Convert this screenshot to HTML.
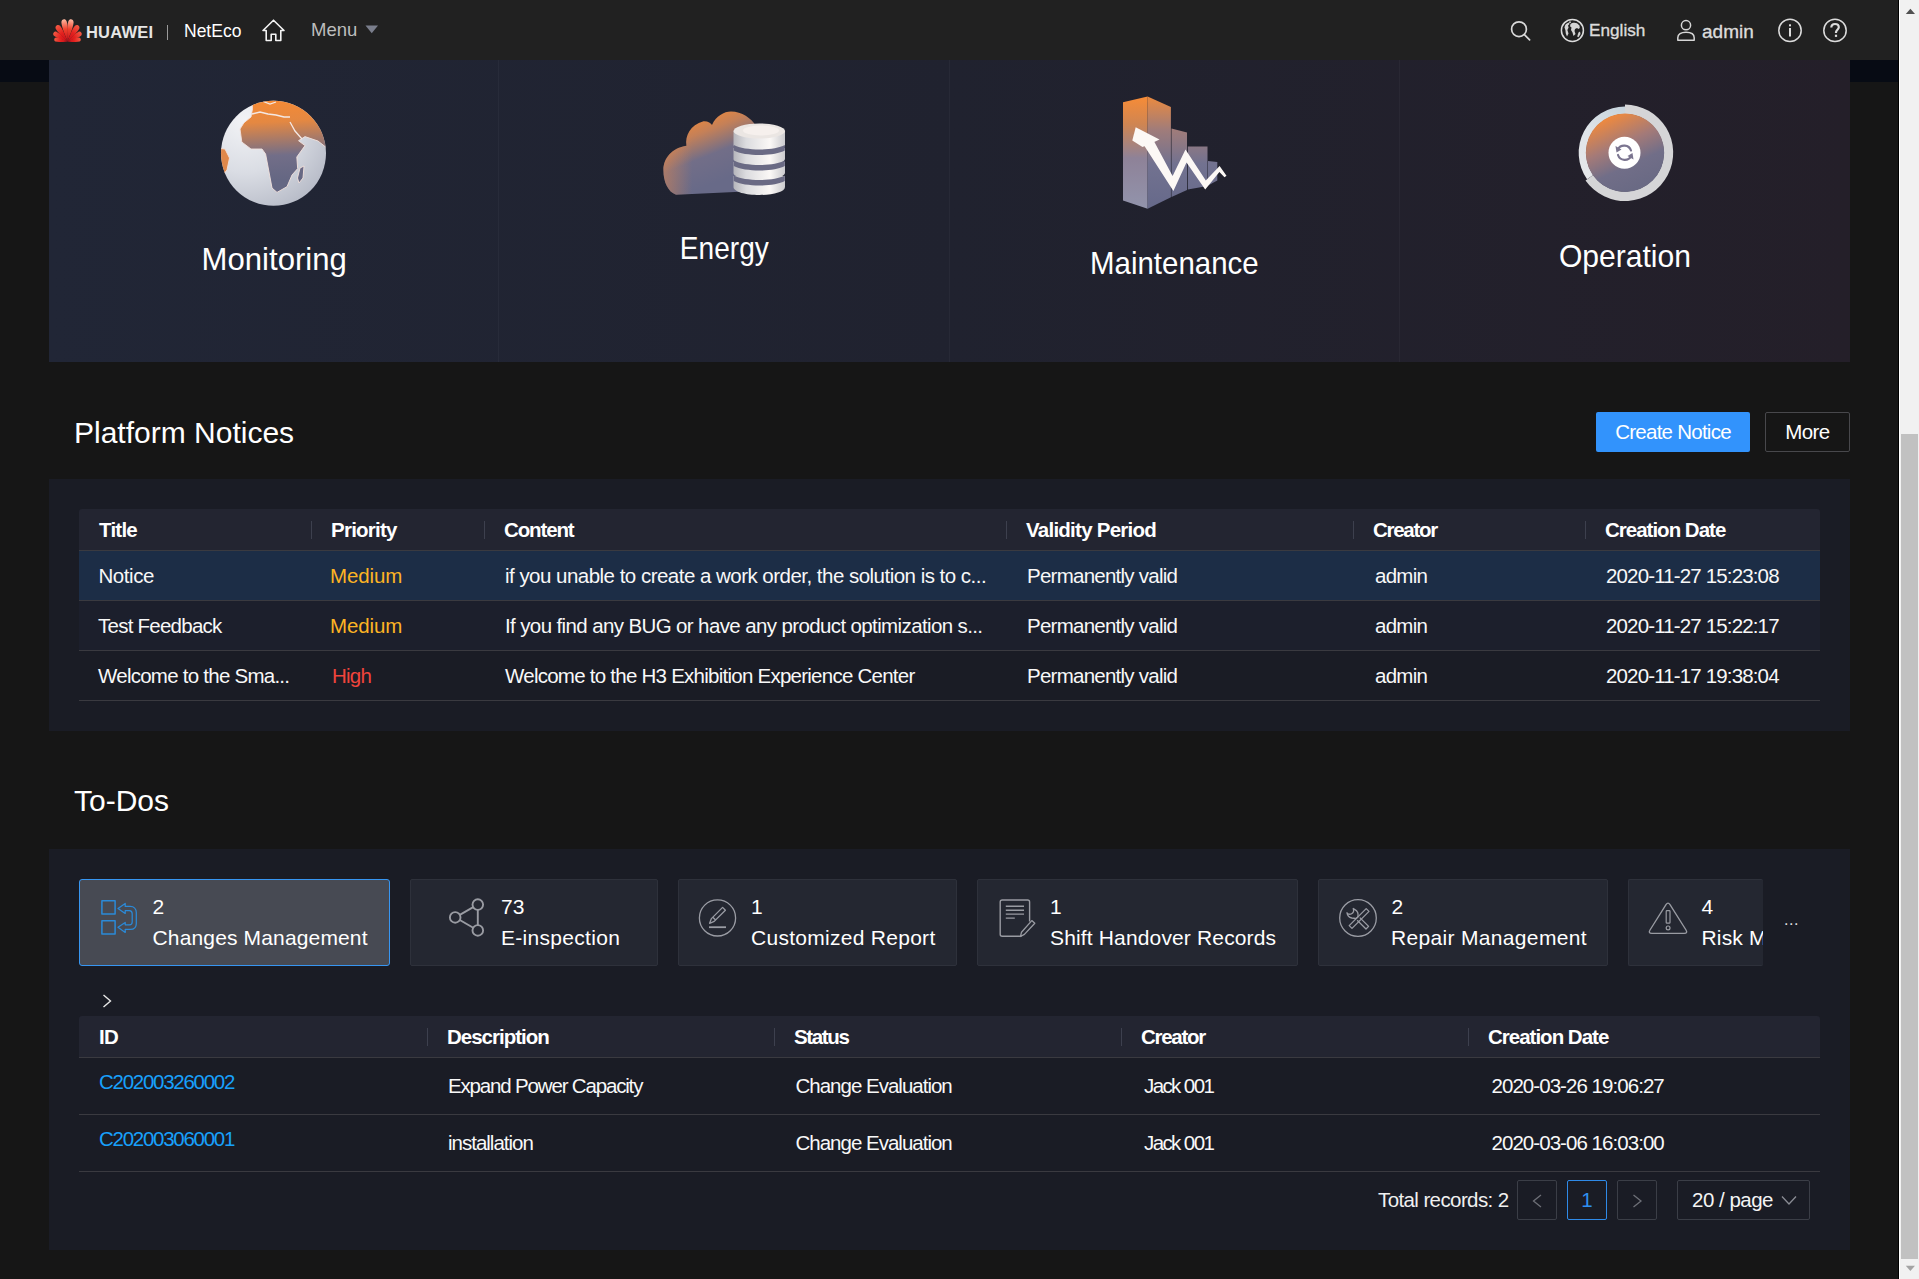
<!DOCTYPE html>
<html><head><meta charset="utf-8">
<style>
*{margin:0;padding:0;box-sizing:border-box}
html,body{width:1919px;height:1279px;overflow:hidden;background:#161616;font-family:"Liberation Sans",sans-serif;color:#fff}
.a{position:absolute}
#hdr{left:0;top:0;width:1898px;height:60px;background:#212121}
#navy{left:0;top:60px;width:1898px;height:22px;background:#070b14}
#card{left:49px;top:60px;width:1801px;height:302px;background:linear-gradient(90deg,#212636 0%,#20222f 50%,#241f29 100%)}
.div{top:0;width:1px;height:302px;background:rgba(255,255,255,0.035)}
.apt{font-size:30.5px;color:#ffffff;white-space:nowrap;line-height:1}
.sect{font-size:30px;color:#fff;white-space:nowrap;line-height:1}
.panel{background:#1a1c25}
.th{background:#232531}
.tx{white-space:nowrap;line-height:1;font-size:19px;color:#f2f2f2}
.b{font-weight:bold;font-size:18.7px;color:#fff}
.sep{width:1px;height:18px;background:#3c3f4c}
.hl{background:#1c2d46}
.ln{height:1px;background:#3a3a40}
.tab{background:#242731;border:1px solid #2e313b;border-radius:2px}
.tab.sel{background:#474a53;border:1px solid #3796f2;border-radius:3px}
.tl{font-size:21.4px;line-height:1;white-space:nowrap;color:#fff}
.row{position:absolute;left:79px;width:1741px}
.row .c{position:absolute;top:0;white-space:nowrap;font-size:20.5px;letter-spacing:-0.75px;color:#f8f8f8}
.row.h .c{font-weight:bold;color:#ffffff;letter-spacing:-0.75px}
.row .s{position:absolute;width:1px;height:18px;background:#3d404e}
.tn{position:absolute;top:895.8px;font-size:21px;line-height:1;color:#fff;white-space:nowrap}
.tlb{position:absolute;top:926.9px;font-size:21px;line-height:1;color:#fff;white-space:nowrap;letter-spacing:0.15px}
#sb{left:1898px;top:0;width:21px;height:1279px;background:#f1f1f1;border-left:1px solid #000}
</style></head><body>
<div id="hdr" class="a">
  <svg class="a" style="left:52px;top:18px" width="31" height="24" viewBox="0 0 31 24">
    <defs>
      <linearGradient id="hwa" x1="0" y1="0" x2="0" y2="1"><stop offset="0" stop-color="#ffb8a0"/><stop offset="0.45" stop-color="#f0402c"/><stop offset="1" stop-color="#c50f1a"/></linearGradient>
      <linearGradient id="hwb" x1="0" y1="0" x2="0" y2="1"><stop offset="0" stop-color="#f35a44"/><stop offset="0.5" stop-color="#e3201e"/><stop offset="1" stop-color="#c50f1a"/></linearGradient>
    </defs>
    <path fill="url(#hwa)" d="M0 0 C-1.62 -7.87 -3.24 -15.30 -2.70 -19.80 C-2.03 -23.18 2.03 -23.18 2.70 -19.80 C3.24 -15.30 1.62 -7.87 0 0Z" transform="translate(15.5 23.4) rotate(10)"/>
    <path fill="url(#hwa)" d="M0 0 C-1.62 -7.87 -3.24 -15.30 -2.70 -19.80 C-2.03 -23.18 2.03 -23.18 2.70 -19.80 C3.24 -15.30 1.62 -7.87 0 0Z" transform="translate(15.5 23.4) rotate(-10)"/>
    <path fill="url(#hwb)" d="M0 0 C-1.56 -6.82 -3.12 -13.26 -2.60 -17.16 C-1.95 -20.09 1.95 -20.09 2.60 -17.16 C3.12 -13.26 1.56 -6.82 0 0Z" transform="translate(15.5 23.4) rotate(34)"/>
    <path fill="url(#hwb)" d="M0 0 C-1.56 -6.82 -3.12 -13.26 -2.60 -17.16 C-1.95 -20.09 1.95 -20.09 2.60 -17.16 C3.12 -13.26 1.56 -6.82 0 0Z" transform="translate(15.5 23.4) rotate(-34)"/>
    <path fill="url(#hwb)" d="M0 0 C-1.44 -5.77 -2.88 -11.22 -2.40 -14.52 C-1.80 -17.00 1.80 -17.00 2.40 -14.52 C2.88 -11.22 1.44 -5.77 0 0Z" transform="translate(15.5 23.4) rotate(58)"/>
    <path fill="url(#hwb)" d="M0 0 C-1.44 -5.77 -2.88 -11.22 -2.40 -14.52 C-1.80 -17.00 1.80 -17.00 2.40 -14.52 C2.88 -11.22 1.44 -5.77 0 0Z" transform="translate(15.5 23.4) rotate(-58)"/>
    <path fill="url(#hwb)" d="M0 0 C-1.20 -4.72 -2.40 -9.18 -2.00 -11.88 C-1.50 -13.91 1.50 -13.91 2.00 -11.88 C2.40 -9.18 1.20 -4.72 0 0Z" transform="translate(15.5 23.4) rotate(81)"/>
    <path fill="url(#hwb)" d="M0 0 C-1.20 -4.72 -2.40 -9.18 -2.00 -11.88 C-1.50 -13.91 1.50 -13.91 2.00 -11.88 C2.40 -9.18 1.20 -4.72 0 0Z" transform="translate(15.5 23.4) rotate(-81)"/>
  </svg>
  <div class="a" style="left:86px;top:24px;font-size:16.5px;font-weight:bold;color:#e6e6e6;line-height:1;letter-spacing:0.2px">HUAWEI</div>
  <div class="a" style="left:167px;top:25px;width:1px;height:15px;background:#9a9a9a"></div>
  <div class="a" style="left:184px;top:23px;font-size:17.5px;color:#fff;line-height:1">NetEco</div>
  <svg class="a" style="left:262px;top:19px" width="24" height="24" viewBox="0 0 24 24" fill="none" stroke="#f4f4f4" stroke-width="1.6" stroke-linejoin="round">
    <path d="M11.5 1.2 L22 11.5 H18.8 V21.5 H13.8 V15.2 H9.2 V21.5 H4.2 V11.5 H1 Z"/>
  </svg>
  <div class="a" style="left:311px;top:21px;font-size:18.5px;color:#bdbdbd;line-height:1">Menu</div>
  <svg class="a" style="left:365px;top:25px" width="14" height="9" viewBox="0 0 14 9"><path d="M0.5 0.5 H13 L6.75 8.2Z" fill="#7a7e8c"/></svg>

  <svg class="a" style="left:1509px;top:19px" width="24" height="24" viewBox="0 0 24 24" fill="none" stroke="#d9d9d9" stroke-width="1.7">
    <circle cx="10" cy="10.2" r="7.4"/><path d="M15.4 15.6 L20.6 20.8" stroke-linecap="round"/>
  </svg>
  <svg class="a" style="left:1560px;top:18px" width="25" height="25" viewBox="0 0 25 25">
    <circle cx="12.4" cy="12.4" r="11" fill="none" stroke="#dcdcdc" stroke-width="1.5"/>
    <g fill="#d4d4d4">
      <path d="M5 7.5 C6 6 7.5 5 9 4.6 L9.5 6 L8 7.5 L8.6 9.5 L7.4 12 L8.5 15.5 L7 18.5 L5.8 15.5 L5.4 12 L4.5 9.5Z"/>
      <path d="M10.5 6 C12 4.5 15 4.3 17 5.2 L19.5 7.5 L19.8 10 L18.5 11 L17 10 L15 11 L14.5 13 L15.5 16 L13.5 18 L12.5 14.5 L11 12 L11.5 9.5 L10 8.3Z"/>
      <path d="M18.5 14.5 L20 13.5 L20.5 16 L18.5 19.2 L17.2 18.5Z"/>
      <circle cx="10" cy="4.2" r="0.9"/>
    </g>
  </svg>
  <div class="a" style="left:1589px;top:22px;font-size:17.2px;color:#dcdcdc;line-height:1;-webkit-text-stroke:0.35px #dcdcdc">English</div>
  <svg class="a" style="left:1676px;top:19px" width="20" height="23" viewBox="0 0 20 23" fill="none" stroke="#d6d6d6" stroke-width="1.5">
    <circle cx="10" cy="6.2" r="4.6"/>
    <path d="M1.8 21.2 V18.8 C1.8 15.2 5 13.3 10 13.3 C15 13.3 18.2 15.2 18.2 18.8 V21.2 Z" stroke-linejoin="round"/>
  </svg>
  <div class="a" style="left:1702px;top:22px;font-size:19px;color:#dcdcdc;line-height:1;-webkit-text-stroke:0.35px #dcdcdc">admin</div>
  <svg class="a" style="left:1777px;top:18px" width="26" height="25" viewBox="0 0 26 25">
    <circle cx="13" cy="12.4" r="11.2" fill="none" stroke="#dcdcdc" stroke-width="1.5"/>
    <rect x="12" y="10" width="2" height="8.5" fill="#dcdcdc"/><rect x="12" y="6.3" width="2" height="2" fill="#dcdcdc"/>
  </svg>
  <svg class="a" style="left:1822px;top:18px" width="26" height="25" viewBox="0 0 26 25">
    <circle cx="13" cy="12.4" r="11.2" fill="none" stroke="#dcdcdc" stroke-width="1.5"/>
    <path d="M9.3 9.6 C9.3 7.2 11 6 13 6 C15.2 6 16.8 7.3 16.8 9.3 C16.8 11.5 14 12 14 14.3 V15" fill="none" stroke="#dcdcdc" stroke-width="2.2"/>
    <rect x="12.9" y="16.7" width="2.2" height="2.2" fill="#dcdcdc"/>
  </svg>
</div>
<div id="navy" class="a"></div>
<div id="card" class="a">
  <div class="a div" style="left:449px"></div>
  <div class="a div" style="left:900px"></div>
  <div class="a div" style="left:1350px"></div>
</div>

<svg class="a" style="left:0;top:60px" width="1898" height="302" viewBox="0 60 1898 302">
  <defs>
    <linearGradient id="land" x1="262" y1="100" x2="266" y2="180" gradientUnits="userSpaceOnUse">
      <stop offset="0" stop-color="#f68a34"/><stop offset="0.28" stop-color="#e48842"/><stop offset="0.5" stop-color="#a87a68"/><stop offset="0.7" stop-color="#726e88"/><stop offset="1" stop-color="#656783"/>
    </linearGradient>
    <radialGradient id="sph" cx="245" cy="120" r="95" gradientUnits="userSpaceOnUse">
      <stop offset="0" stop-color="#f2f3f6"/><stop offset="0.55" stop-color="#dadde4"/><stop offset="1" stop-color="#b9bdc9"/>
    </radialGradient>
    <clipPath id="gclip"><circle cx="273.5" cy="153.3" r="52.5"/></clipPath>
    <linearGradient id="cloud" x1="695" y1="112" x2="722" y2="180" gradientUnits="userSpaceOnUse">
      <stop offset="0" stop-color="#f68a36"/><stop offset="0.3" stop-color="#c48058"/><stop offset="0.62" stop-color="#726e88"/><stop offset="1" stop-color="#686a88"/>
    </linearGradient>
    <linearGradient id="cloudl" x1="663" y1="0" x2="692" y2="0" gradientUnits="userSpaceOnUse">
      <stop offset="0" stop-color="#f08a44" stop-opacity="0.45"/><stop offset="1" stop-color="#f08a44" stop-opacity="0"/></linearGradient>
    <linearGradient id="disc" x1="733" y1="0" x2="786" y2="0" gradientUnits="userSpaceOnUse">
      <stop offset="0" stop-color="#b4b4ba"/><stop offset="0.25" stop-color="#dcdcdf"/><stop offset="0.7" stop-color="#fbf8f6"/><stop offset="1" stop-color="#c8c8cc"/>
    </linearGradient>
    <linearGradient id="bar" x1="0" y1="96" x2="0" y2="209" gradientUnits="userSpaceOnUse">
      <stop offset="0" stop-color="#f88c36"/><stop offset="0.25" stop-color="#cf8552"/><stop offset="0.55" stop-color="#8e8298"/><stop offset="1" stop-color="#9294ac"/>
    </linearGradient>
    <linearGradient id="bar2" x1="0" y1="96" x2="0" y2="209" gradientUnits="userSpaceOnUse">
      <stop offset="0" stop-color="#ec8a3e"/><stop offset="0.3" stop-color="#a07c7a"/><stop offset="0.6" stop-color="#727290"/><stop offset="1" stop-color="#66698a"/>
    </linearGradient>
    <linearGradient id="opd" x1="1608" y1="116" x2="1640" y2="186" gradientUnits="userSpaceOnUse">
      <stop offset="0" stop-color="#f28a3c"/><stop offset="0.4" stop-color="#a47a78"/><stop offset="0.7" stop-color="#716e88"/><stop offset="1" stop-color="#6a6a84"/>
    </linearGradient>
    <linearGradient id="ringl" x1="1580" y1="190" x2="1625" y2="106" gradientUnits="userSpaceOnUse">
      <stop offset="0" stop-color="#e8e8ea"/><stop offset="0.6" stop-color="#dfe4e8"/><stop offset="1" stop-color="#c5d3dd"/>
    </linearGradient>
  </defs>

  <!-- Globe -->
  <circle cx="273.5" cy="153.3" r="52.5" fill="url(#sph)"/>
  <g clip-path="url(#gclip)" fill="url(#land)" stroke="#f3e2dc" stroke-width="0.9">
    <path d="M251.7 100 L330 100 L330 147 L325.6 147 L318 141 L305 136.6 L298.5 140.7 L305 145.6 L296.8 157 L297.7 168.6 L292 175 L287 186.7 L277 192.4 L272 188 L269 172 L265.6 154 L262 149 L251 149 L241.8 142 L240 129 L244 122.7 L251 117 L252.5 108.7 Z"/>
    <path fill="#e0884a" d="M215 148 L225 149 L229.5 158 L227 170 L222 176 L215 176 Z"/>
    <path d="M300 168 L304 166 L303 178 L299 183 L297.5 178 Z"/>
  </g>
  <g clip-path="url(#gclip)" fill="none" stroke="#f4e8e4" stroke-width="1.3">
    <path d="M252 114 L260 112 L268 114 L276 115 L284 117 L290 117"/>
    <path d="M290 122 L295 131 L302 139"/>
    <path d="M262 101 L270 104 L276 102"/>
  </g>

  <!-- Energy cloud -->
  <path fill="url(#cloud)" d="M676 194.7 C668 192 663.4 182 663.4 170 C663.4 158 672 148 686.4 145.7 C685 136 690 125 703.5 121.2 C708 121 711 123 712 125 C716 116 724 111.5 731 111.5 C742 111.5 751 118 756 126 L756 191 L676 194.7 Z"/>
  <path fill="url(#cloudl)" d="M676 194.7 C668 192 663.4 182 663.4 170 C663.4 158 672 148 686.4 145.7 C685 136 690 125 703.5 121.2 C708 121 711 123 712 125 C716 116 724 111.5 731 111.5 C742 111.5 751 118 756 126 L756 191 L676 194.7 Z"/>
  <g>
    <path fill="url(#disc)" d="M733.5 176 V187 C733.5 192 746 195 759.3 195 C772.5 195 785 192 785 187 V176 Z"/>
    <path fill="url(#disc)" d="M733.5 162 V173 C733.5 177 746 180 759.3 180 C772.5 180 785 177 785 173 V162 Z"/>
    <path fill="url(#disc)" d="M733.5 148 V159 C733.5 163 746 166 759.3 166 C772.5 166 785 163 785 159 V148 Z"/>
    <path fill="url(#disc)" d="M733.5 131 V145 C733.5 149 746 152 759.3 152 C772.5 152 785 149 785 145 V131 Z"/>
    <ellipse cx="759.3" cy="131" rx="25.8" ry="7.5" fill="#ebe6e3"/>
    <ellipse cx="761" cy="130.5" rx="18" ry="5" fill="#f6f0ed"/>
    <path d="M733.8 145 C739 148 750 149.5 759.3 149.5 C768.5 149.5 779.5 148 784.8 145 V150.5 C779.5 153.5 768.5 155 759.3 155 C750 155 739 153.5 733.8 150.5Z" fill="#6a6a84"/>
    <path d="M733.8 160.5 C739 163.5 750 165.0 759.3 165.0 C768.5 165.0 779.5 163.5 784.8 160.5 V166.0 C779.5 169.0 768.5 170.5 759.3 170.5 C750 170.5 739 169.0 733.8 166.0Z" fill="#6a6a84"/>
    <path d="M733.8 175.5 C739 178.5 750 180.0 759.3 180.0 C768.5 180.0 779.5 178.5 784.8 175.5 V181.0 C779.5 184.0 768.5 185.5 759.3 185.5 C750 185.5 739 184.0 733.8 181.0Z" fill="#6a6a84"/>
    </g>

  <!-- Maintenance bars -->
  <path fill="url(#bar)" d="M1123 102.2 L1147.6 96.4 L1147.6 208.8 L1123 200.6 Z"/>
  <path fill="url(#bar2)" d="M1147.6 96.4 L1170.9 107 L1170.9 197.3 L1147.6 208.8 Z"/>
  <path fill="url(#bar2)" d="M1171.5 128.4 L1187 132.5 L1187 190 L1171.5 197 Z"/>
  <path fill="url(#bar2)" d="M1187.8 146.5 L1207.5 146.5 L1207.5 185.9 L1187.8 189.6 Z"/>
  <path fill="url(#bar2)" d="M1208 161 L1217.3 162 L1217.3 180.5 L1208 185.5 Z"/>
  <path fill="#fcf8f5" d="M1135.7 127.3 L1159.5 139.5 L1151 143.5 L1142.5 147 L1132.3 140.5 Z"/>
  <path fill="#fcf8f5" d="M1143.3 144.3 L1173.4 190.9 L1186.5 162.6 L1205.2 189.5 L1219.4 172.1 L1224.5 177.3 L1226.5 175.7 L1219.6 165.9 L1205.8 180.5 L1185.5 149.4 L1172.6 176.1 L1152.7 138.7 Z"/>

  <!-- Operation -->
  <path d="M1625.00 104.60 A48.2 48.2 0 1 1 1585.52 180.45 L1593.22 175.05 A38.8 38.8 0 1 0 1625.00 114.00 Z" fill="#d5d5d7"/>
  <path d="M1587.07 179.36 A46.3 46.3 0 0 1 1625.00 106.50 L1625.00 114.00 A38.8 38.8 0 0 0 1593.22 175.05 Z" fill="url(#ringl)"/>
  <circle cx="1625" cy="152.8" r="39.2" fill="url(#opd)"/>
  <circle cx="1624.5" cy="152.8" r="16" fill="#ffffff"/>
  <g fill="none" stroke="#7b7590" stroke-width="2.2" stroke-linecap="round">
    <path d="M1617.8 149.5 A7.2 7.2 0 0 1 1631 150.5"/>
    <path d="M1631.2 156 A7.2 7.2 0 0 1 1618 155"/>
  </g>
  <path d="M1615.5 146 L1621.5 149.5 L1616.5 152.5Z" fill="#7b7590"/>
  <path d="M1633.5 159.5 L1627.5 156 L1632.5 153Z" fill="#7b7590"/>
</svg>
<div class="a apt" style="left:49px;width:450px;text-align:center;top:244px"><span style="display:inline-block;transform:scaleX(1.02)">Monitoring</span></div>
<div class="a apt" style="left:499px;width:450px;text-align:center;top:233px"><span style="display:inline-block;transform:scaleX(0.92)">Energy</span></div>
<div class="a apt" style="left:949px;width:451px;text-align:center;top:248.2px"><span style="display:inline-block;transform:scaleX(0.965)">Maintenance</span></div>
<div class="a apt" style="left:1400px;width:450px;text-align:center;top:240.5px"><span style="display:inline-block;transform:scaleX(0.985)">Operation</span></div>

<div class="a sect" style="left:74px;top:418px">Platform Notices</div>
<div class="a" style="left:1596px;top:412px;width:154px;height:40px;background:#3293fc;border-radius:2px;text-align:center;line-height:39px;font-size:20.5px;letter-spacing:-0.75px;color:#fff;white-space:nowrap">Create Notice</div>
<div class="a" style="left:1765px;top:412px;width:85px;height:40px;border:1px solid #48484c;border-radius:2px;text-align:center;line-height:37px;font-size:20.5px;letter-spacing:-0.6px;color:#fff;white-space:nowrap">More</div>

<div class="a panel" style="left:49px;top:479px;width:1801px;height:252px"></div>
<div class="a th" style="left:79px;top:509px;width:1741px;height:41px;border-radius:3px 3px 0 0"></div>
<div class="a ln" style="left:79px;top:550px;width:1741px"></div>
<div class="a hl" style="left:79px;top:551px;width:1741px;height:49px"></div>
<div class="a ln" style="left:79px;top:600px;width:1741px"></div>
<div class="a" style="left:79px;top:601px;width:1741px;height:49px;background:#1c1f2c"></div>
<div class="a ln" style="left:79px;top:650px;width:1741px"></div>
<div class="a ln" style="left:79px;top:700px;width:1741px"></div>


<div class="row h" style="top:509px;height:41px;line-height:41px">
  <div class="c" style="left:20px">Title</div>
  <div class="s" style="left:232px;top:12px"></div><div class="c" style="left:252px">Priority</div>
  <div class="s" style="left:405px;top:12px"></div><div class="c" style="left:425px;letter-spacing:-1.13px">Content</div>
  <div class="s" style="left:927px;top:12px"></div><div class="c" style="left:947px">Validity Period</div>
  <div class="s" style="left:1274px;top:12px"></div><div class="c" style="left:1294px;letter-spacing:-1.28px">Creator</div>
  <div class="s" style="left:1506px;top:12px"></div><div class="c" style="left:1526px;letter-spacing:-1.0px">Creation Date</div>
</div>
<div class="row" style="top:551px;height:49px;line-height:49px">
  <div class="c" style="left:19.5px;letter-spacing:-0.45px">Notice</div>
  <div class="c" style="left:251px;color:#fcb424;letter-spacing:-0.1px">Medium</div>
  <div class="c" style="left:426px;letter-spacing:-0.52px">if you unable to create a work order, the solution is to c...</div>
  <div class="c" style="left:948px">Permanently valid</div>
  <div class="c" style="left:1296px">admin</div>
  <div class="c" style="left:1527px;letter-spacing:-0.85px">2020-11-27 15:23:08</div>
</div>
<div class="row" style="top:601px;height:49px;line-height:49px">
  <div class="c" style="left:19px">Test Feedback</div>
  <div class="c" style="left:251px;color:#fcb424;letter-spacing:-0.1px">Medium</div>
  <div class="c" style="left:426px;letter-spacing:-0.62px">If you find any BUG or have any product optimization s...</div>
  <div class="c" style="left:948px">Permanently valid</div>
  <div class="c" style="left:1296px">admin</div>
  <div class="c" style="left:1527px;letter-spacing:-0.85px">2020-11-27 15:22:17</div>
</div>
<div class="row" style="top:651px;height:49px;line-height:49px">
  <div class="c" style="left:19px">Welcome to the Sma...</div>
  <div class="c" style="left:253px;color:#f0443c">High</div>
  <div class="c" style="left:426px">Welcome to the H3 Exhibition Experience Center</div>
  <div class="c" style="left:948px">Permanently valid</div>
  <div class="c" style="left:1296px">admin</div>
  <div class="c" style="left:1527px;letter-spacing:-0.85px">2020-11-17 19:38:04</div>
</div>
<div class="a sect" style="left:74px;top:786.3px">To-Dos</div>
<div class="a panel" style="left:49px;top:849px;width:1801px;height:401px"></div>
<div class="a tab sel" style="left:79px;top:879px;width:311px;height:87px"></div>
<div class="a tab" style="left:410px;top:879px;width:248px;height:87px"></div>
<div class="a tab" style="left:678px;top:879px;width:279px;height:87px"></div>
<div class="a tab" style="left:977px;top:879px;width:321px;height:87px"></div>
<div class="a tab" style="left:1318px;top:879px;width:290px;height:87px"></div>
<div class="a tab" style="left:1628px;top:879px;width:135px;height:87px;border-right:none"></div>


<svg class="a" style="left:0;top:870px" width="1898" height="150" viewBox="0 870 1898 150" fill="none">
  <g stroke="#2b8ad8" stroke-width="1.5" stroke-linejoin="round">
    <rect x="101.9" y="900.8" width="13.2" height="13.2"/>
    <rect x="101.9" y="920.8" width="13.2" height="13.2"/>
    <path d="M118 908.4 L125.2 903.4 V906.4 H130.2 C134 906.4 136.3 909 136.3 912.6 V923.4 C136.3 927 134 929.4 130.2 929.4 H125.2 V932.4 L118 927.3 L125.2 922.4 V924.8 H129.4 C131.2 924.8 132.2 923.8 132.2 922 V913.8 C132.2 912 131.2 910.6 129.4 910.6 H125.2 V913.4 Z" stroke-width="1.25"/>
  </g>
  <g stroke="#999ba2" stroke-width="1.9">
    <circle cx="477.8" cy="904.6" r="5.3"/>
    <circle cx="455.2" cy="917.4" r="5.3"/>
    <circle cx="477.8" cy="930.4" r="5.3"/>
    <path d="M459.8 914.8 L473.2 907.2 M459.8 920 L473.2 927.8 M477.8 909.9 V925.1"/>
  </g>
  <g stroke="#9a9ca4" stroke-width="1.3" stroke-linejoin="round">
    <circle cx="717.5" cy="917.9" r="18.1"/>
    <path d="M722.6 907.4 L725.4 910.2 L714.2 921.4 L709.6 923.3 L711.4 918.6 Z"/>
    <path d="M712.8 917.2 L715.6 920" />
    <path d="M709 927.2 H726" stroke-width="1.8"/>
  </g>
  <g stroke="#999ba2" stroke-width="1.4">
    <path d="M1021.5 936.3 H1002.2 Q1000.2 936.3 1000.2 934.3 V902 Q1000.2 900 1002.2 900 H1027.6 Q1029.6 900 1029.6 902 V921.5"/>
    <path d="M1005.8 906.2 H1024 M1005.8 910.2 H1024 M1005.8 914.1 H1024 M1005.8 918.1 H1014.8"/>
    <path d="M1031.8 920.6 L1034.8 923.3 L1024.4 934.4 L1020.5 936.5 L1021.5 932.2 Z" stroke-width="1.3" stroke-linejoin="round"/>
  </g>
  <g stroke="#9a9ca4" stroke-width="1.3" stroke-linejoin="round">
    <circle cx="1358" cy="918" r="18.3"/>
    <path d="M1366.2 908.6 L1369 911.4 L1352 928.4 L1349.2 925.6 Z"/>
    <path d="M1357.2 920.2 L1366 929 L1368.6 926.4 L1359.8 917.6"/>
    <path d="M1357.8 917 C1358.6 914 1357.6 911 1354.6 909.4 L1353.2 908.5 C1354.2 910.8 1353.6 913 1351.2 914 C1349.2 914.6 1347.8 913.8 1347 912.8 C1347.4 915.6 1349.2 917.4 1351.8 918 C1353.6 918.3 1355 918.2 1356 918.6 Z"/>
  </g>
  <g stroke="#999ba2" stroke-width="1.35" stroke-linejoin="round">
    <path d="M1666 904.6 Q1668 901.8 1670 904.6 L1686 930 Q1688 933.4 1684.2 933.4 H1651.8 Q1648 933.4 1650 930 Z"/>
    <rect x="1666.2" y="910.6" width="3.8" height="12.6" rx="0.8" stroke-width="1.2"/>
    <circle cx="1668.1" cy="927.9" r="1.9" stroke-width="1.2"/>
  </g>
  <path d="M103.5 995 L110.5 1001 L103.5 1007" stroke="#e8e8e8" stroke-width="1.4"/>
</svg>
<div class="tn" style="left:152.5px">2</div><div class="tlb" style="left:152.5px">Changes Management</div>
<div class="tn" style="left:501px">73</div><div class="tlb" style="left:501px;letter-spacing:0.3px">E-inspection</div>
<div class="tn" style="left:751px">1</div><div class="tlb" style="left:751px;letter-spacing:0.28px">Customized Report</div>
<div class="tn" style="left:1050px">1</div><div class="tlb" style="left:1050px">Shift Handover Records</div>
<div class="tn" style="left:1391.5px">2</div><div class="tlb" style="left:1391px;letter-spacing:0.33px">Repair Management</div>
<div class="a" style="left:1628px;top:870px;width:135px;height:110px;overflow:hidden">
  <div class="tn" style="left:73.5px;top:25.8px">4</div><div class="tlb" style="left:73.5px;top:56.9px">Risk Management</div>
</div>
<div class="a" style="left:1784px;top:912px;font-size:16px;line-height:1;color:#e0e0e0;letter-spacing:0.5px">...</div>
<div class="a th" style="left:79px;top:1016px;width:1741px;height:41px;border-radius:3px 3px 0 0"></div>
<div class="a ln" style="left:79px;top:1057px;width:1741px"></div>
<div class="a ln" style="left:79px;top:1114px;width:1741px"></div>
<div class="a ln" style="left:79px;top:1171px;width:1741px"></div>


<div class="row h" style="top:1016px;height:41px;line-height:41px">
  <div class="c" style="left:20px">ID</div>
  <div class="s" style="left:348px;top:12px"></div><div class="c" style="left:368px;letter-spacing:-1.0px">Description</div>
  <div class="s" style="left:695px;top:12px"></div><div class="c" style="left:715px;letter-spacing:-1.35px">Status</div>
  <div class="s" style="left:1042px;top:12px"></div><div class="c" style="left:1062px;letter-spacing:-1.28px">Creator</div>
  <div class="s" style="left:1389px;top:12px"></div><div class="c" style="left:1409px;letter-spacing:-1.0px">Creation Date</div>
</div>
<div class="row" style="top:1058px;height:56px;line-height:56px">
  <div class="c" style="left:20px;top:-4.5px;color:#18a0fb;letter-spacing:-1.27px">C202003260002</div>
  <div class="c" style="left:369px;letter-spacing:-1.17px">Expand Power Capacity</div>
  <div class="c" style="left:716.5px;letter-spacing:-1.0px">Change Evaluation</div>
  <div class="c" style="left:1065px;letter-spacing:-1.6px">Jack 001</div>
  <div class="c" style="left:1412.5px;letter-spacing:-0.95px">2020-03-26 19:06:27</div>
</div>
<div class="row" style="top:1115px;height:56px;line-height:56px">
  <div class="c" style="left:20px;top:-4.5px;color:#18a0fb;letter-spacing:-1.27px">C202003060001</div>
  <div class="c" style="left:369px;letter-spacing:-1.0px">installation</div>
  <div class="c" style="left:716.5px;letter-spacing:-1.0px">Change Evaluation</div>
  <div class="c" style="left:1065px;letter-spacing:-1.6px">Jack 001</div>
  <div class="c" style="left:1412.5px;letter-spacing:-0.95px">2020-03-06 16:03:00</div>
</div>
<div class="a" style="left:1378px;top:1180px;height:40px;line-height:40px;font-size:20.5px;letter-spacing:-0.6px;color:#f0f0f0;white-space:nowrap">Total records: 2</div>
<div class="a" style="left:1517px;top:1180px;width:40px;height:40px;border:1px solid #3b3e47;border-radius:2px"></div>
<div class="a" style="left:1567px;top:1180px;width:40px;height:40px;border:1px solid #2f8ae8;border-radius:2px;text-align:center;line-height:38px;font-size:20.5px;color:#2f8ff0">1</div>
<div class="a" style="left:1617px;top:1180px;width:40px;height:40px;border:1px solid #3b3e47;border-radius:2px"></div>
<div class="a" style="left:1677px;top:1180px;width:133px;height:40px;border:1px solid #3b3e47;border-radius:2px"></div>
<div class="a" style="left:1692px;top:1180px;height:40px;line-height:40px;font-size:20.5px;letter-spacing:-0.5px;color:#f4f4f4;white-space:nowrap">20 / page</div>
<svg class="a" style="left:1500px;top:1180px" width="320" height="40" viewBox="1500 1180 320 40" fill="none" stroke-width="1.3">
  <path d="M1541 1195 L1533.5 1201 L1541 1207" stroke="#6e7078"/>
  <path d="M1633.5 1195 L1641 1201 L1633.5 1207" stroke="#6e7078"/>
  <path d="M1782 1196.5 L1789 1204 L1796 1196.5" stroke="#8a8c94"/>
</svg>
<div id="sb" class="a">
  <div class="a" style="left:0;top:0;width:1px;height:1279px;background:#fff"></div>
  <div class="a" style="left:2px;top:434px;width:17px;height:825px;background:#c1c1c1"></div>
  <svg class="a" style="left:0;top:0" width="21" height="1279" viewBox="1898 0 21 1279"><path d="M1904.8 13.9 L1909.4 8.8 L1914 13.9Z" fill="#505050"/><path d="M1904.8 1265.8 L1909.4 1271 L1914 1265.8Z" fill="#a3a3a3"/></svg>
</div>
</body></html>
